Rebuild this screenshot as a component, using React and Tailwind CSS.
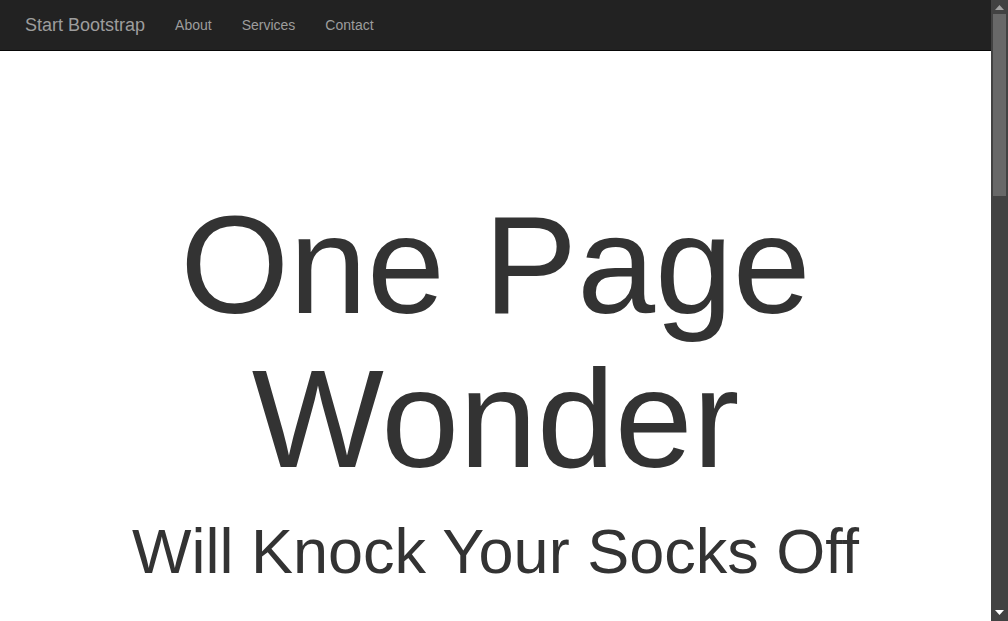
import React from 'react';

const links = ['About', 'Services', 'Contact'];

const Scrollbar = () => (
  <div className="w-[17px] h-full bg-[#424242] flex flex-col items-center shrink-0">
    <div className="h-[14px] w-full flex items-center justify-center">
      <svg width="9" height="5" viewBox="0 0 9 5">
        <polygon points="4.5,0 9,5 0,5" fill="#a3a3a3" />
      </svg>
    </div>
    <div className="w-[13px] h-[182px] bg-[#686868]"></div>
    <div className="flex-1"></div>
    <div className="h-[17px] w-full flex items-center justify-center">
      <svg width="9" height="5" viewBox="0 0 9 5">
        <polygon points="0,0 9,0 4.5,5" fill="#ffffff" />
      </svg>
    </div>
  </div>
);

const App = () => {
  return (
    <div className="h-screen w-full flex overflow-hidden bg-white font-['Liberation_Sans',Arial,sans-serif]">
      <div className="flex-1 flex flex-col overflow-hidden">
        <nav className="h-[51px] shrink-0 bg-[#222222] border-b border-[#080808] flex items-center">
          <a href="#" className="pl-[25px] pr-[15px] text-[18px] leading-5 text-[#9d9d9d]">
            Start Bootstrap
          </a>
          <ul className="flex">
            {links.map((l) => (
              <li key={l}>
                <a href="#" className="block px-[15px] py-[15px] text-[14px] leading-5 text-[#9d9d9d]">
                  {l}
                </a>
              </li>
            ))}
          </ul>
        </nav>
        <header className="text-center text-[#333333] pt-[137px]">
          <h1 className="text-[140px] leading-[1.1] font-normal">
            One Page
            <br />
            Wonder
          </h1>
          <h2 className="mt-[21px] text-[63px] leading-[1.1] font-normal">Will Knock Your Socks Off</h2>
        </header>
      </div>
      <Scrollbar />
    </div>
  );
};

export default App;
